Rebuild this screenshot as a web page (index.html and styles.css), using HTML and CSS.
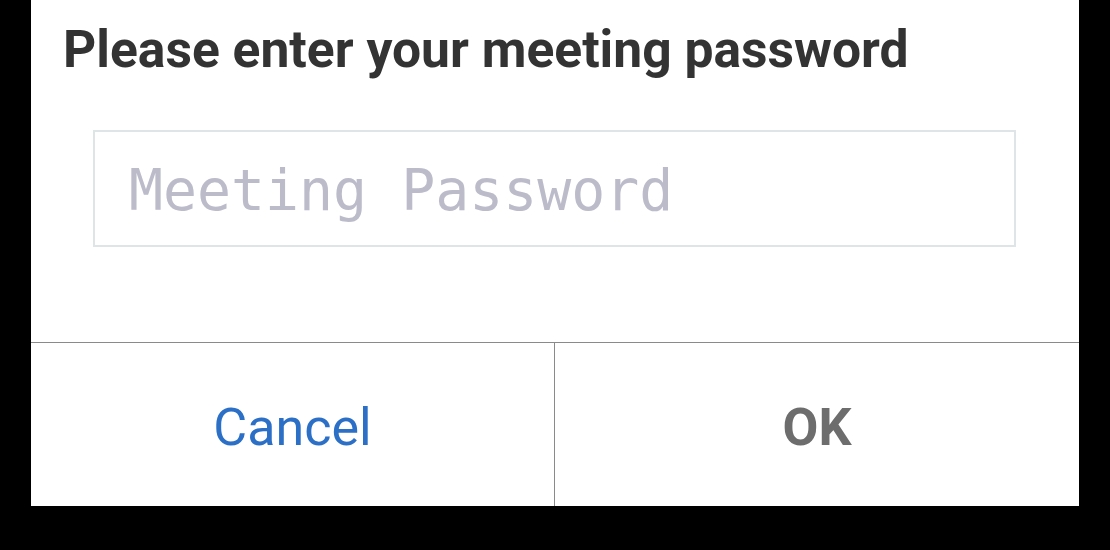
FILE: index.html
```html
<!DOCTYPE html>
<html lang="en">
<head>
<meta charset="utf-8">
<title>Meeting password</title>
<link rel="stylesheet" href="styles.css">
</head>
<body>
  <div class="dialog">
    <div class="content">
      <h1 class="title">Please enter your meeting password</h1>
      <input class="field" type="password" placeholder="Meeting Password">
    </div>
    <div class="actions">
      <button class="btn btn-cancel">Cancel</button>
      <button class="btn btn-ok">OK</button>
    </div>
  </div>
</body>
</html>
```

FILE: styles.css
```css
html, body {
  margin: 0;
  padding: 0;
  background: #000;
  height: 100%;
}

body {
  width: 1110px;
  height: 550px;
  overflow: hidden;
}

.dialog {
  margin-left: 31px;
  width: 1048px;
  height: 506px;
  background: #fff;
  display: flex;
  flex-direction: column;
}

.content {
  flex: 1;
  display: flex;
  flex-direction: column;
  padding: 0 63px 0 32px;
}

.title {
  margin: 0;
  padding-top: 22px;
  font-family: Roboto, "Liberation Sans", sans-serif;
  font-weight: 700;
  font-size: 51.6px;
  line-height: 56px;
  color: #333333;
  letter-spacing: 0;
  white-space: nowrap;
}

.field {
  margin-top: 52px;
  margin-left: 30px;
  box-sizing: border-box;
  width: 923px;
  height: 117px;
  border: 2px solid #dfe4e6;
  border-radius: 0;
  outline: none;
  padding: 4px 0 0 34px;
  font-family: "DejaVu Sans Mono", monospace;
  font-size: 56.5px;
  color: #333;
  background: #fff;
}

.field::placeholder {
  color: #bbbbca;
  opacity: 1;
}

.actions {
  height: 163px;
  border-top: 1px solid #8a8a8a;
  display: flex;
}

.btn {
  border: none;
  background: #fff;
  margin: 0;
  padding: 6px 0 0 0;
  font-family: Roboto, "Liberation Sans", sans-serif;
  font-size: 52px;
  cursor: pointer;
}

.btn-cancel {
  box-sizing: border-box;
  flex: 0 0 524px;
  color: #2b70c6;
  font-weight: 400;
  border-right: 1px solid #8a8a8a;
}

.btn-ok {
  flex: 1;
  color: #6d6d6d;
  font-weight: 700;
}
```
